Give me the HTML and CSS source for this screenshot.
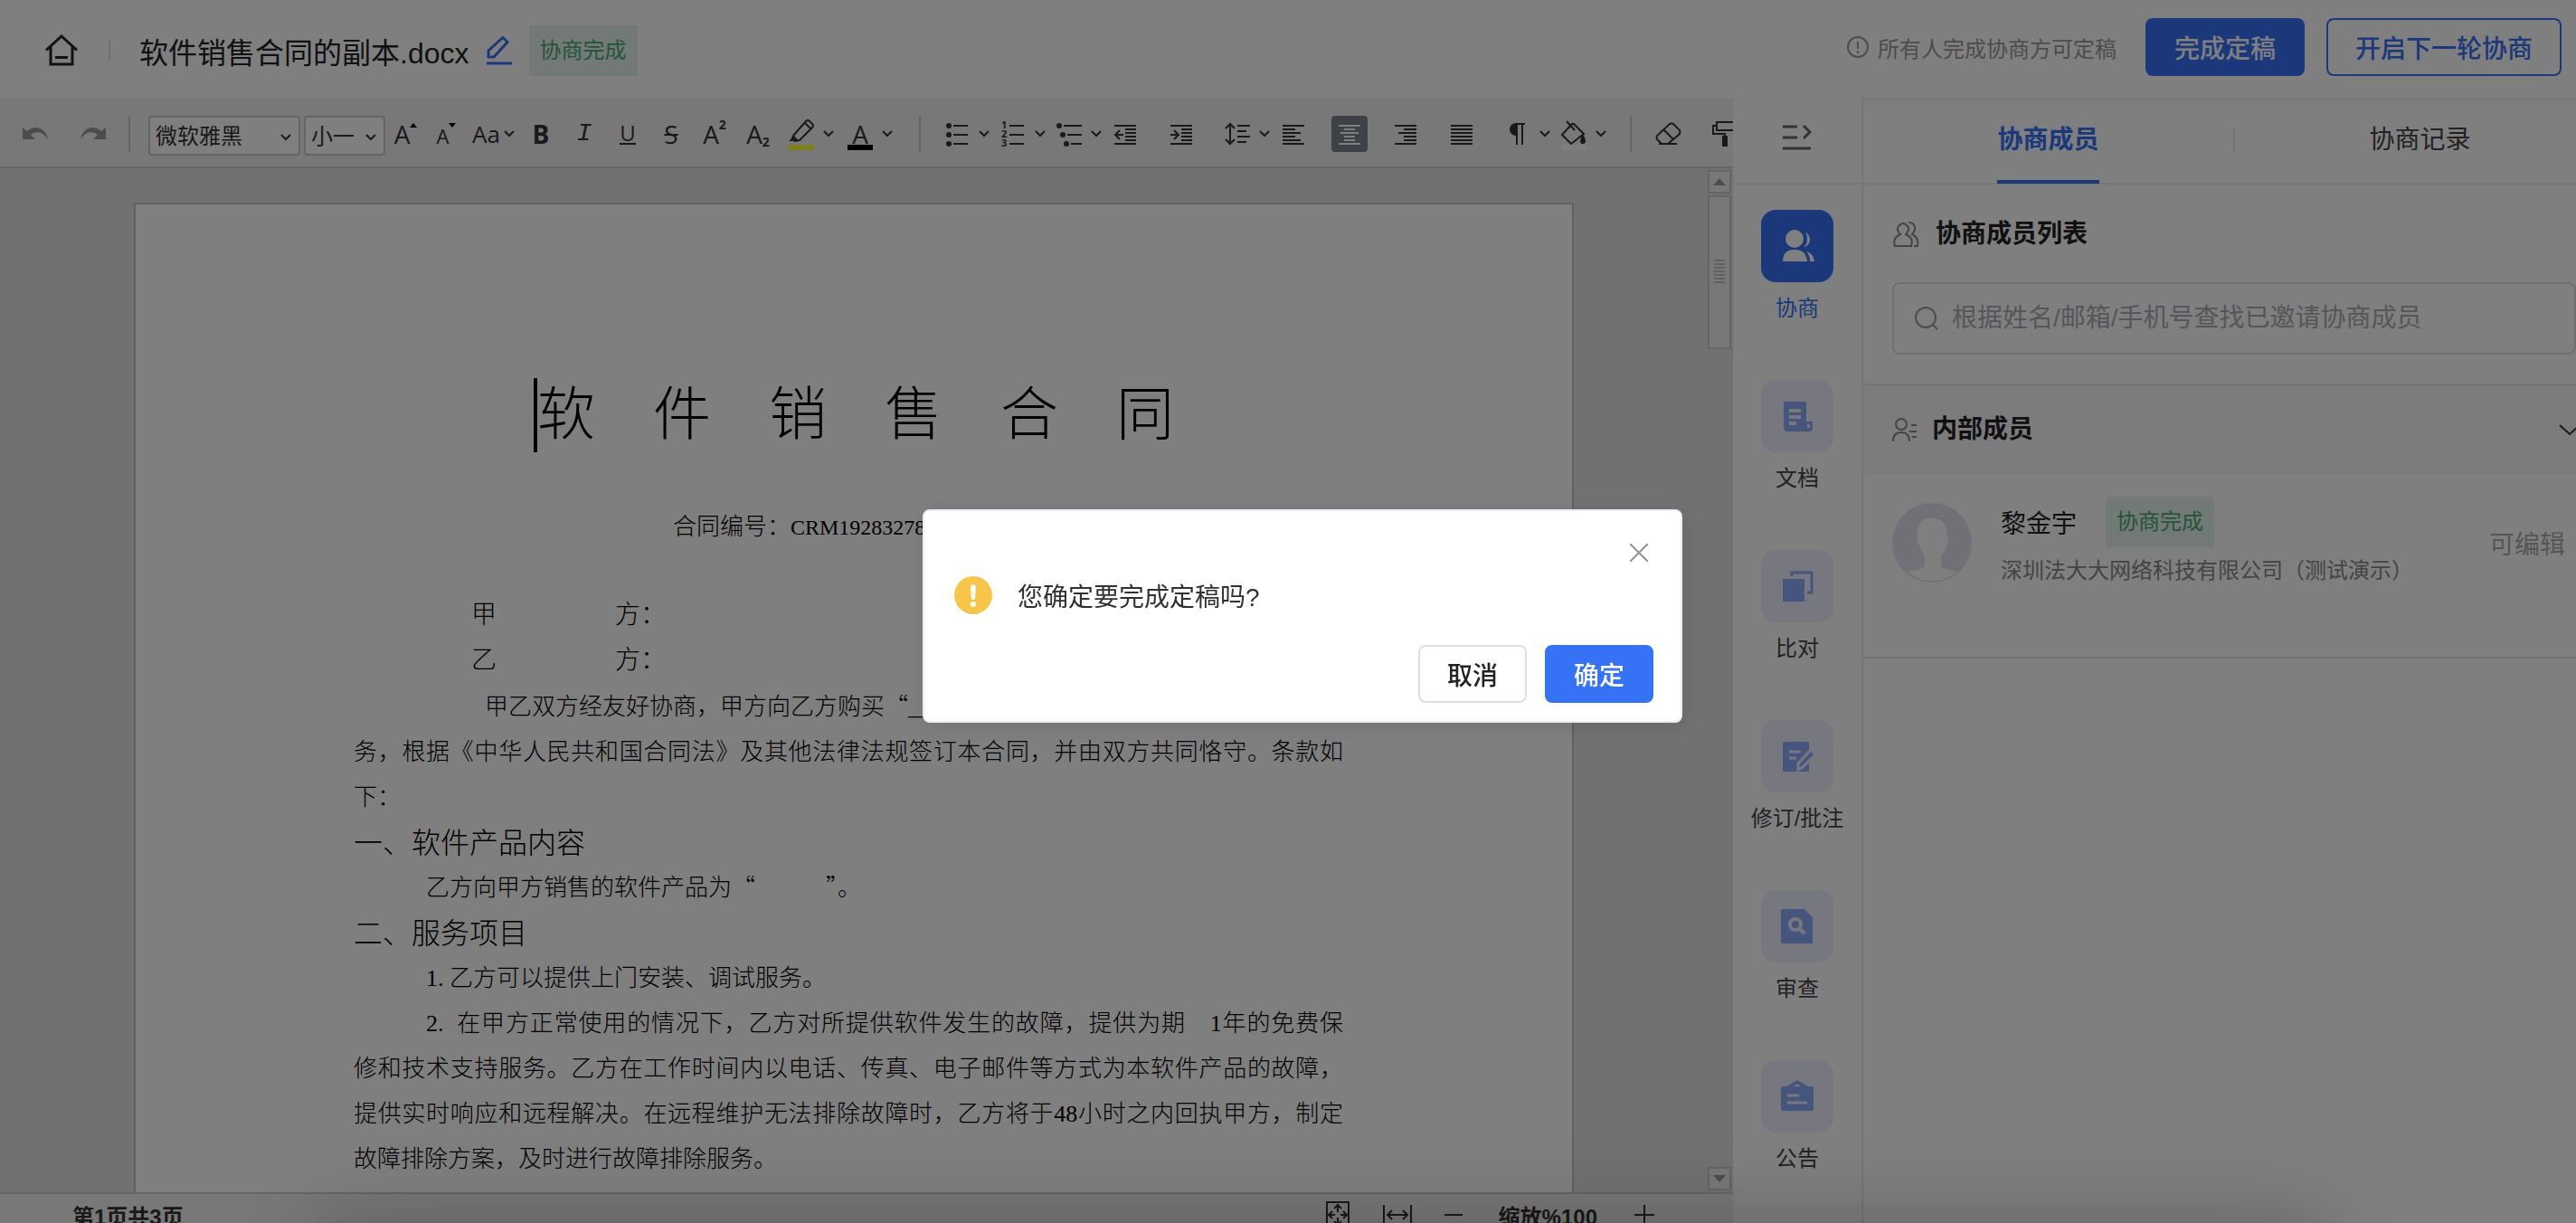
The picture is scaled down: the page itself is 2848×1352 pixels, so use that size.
FILE: index.html
```html
<!DOCTYPE html>
<html lang="zh-CN">
<head>
    <meta charset="UTF-8">
    <meta name="viewport" content="width=device-width, initial-scale=1.0">
    <title>合同协商</title>
    <link rel="stylesheet" href="styles.css">
</head>
<body>
    <svg class="sprite" aria-hidden="true">
        <symbol id="caret" viewBox="0 0 12 8"><path d="M1 1l5 5 5-5" fill="none" stroke="currentColor" stroke-width="2"/></symbol>
        <symbol id="arrow-down" viewBox="0 0 24 14"><path d="M1 2l11 10L23 2" fill="none" stroke="currentColor" stroke-width="2"/></symbol>
    </svg>
    <div class="app">
        <header class="header">
            <div class="header-left">
                <a href="#" class="home" aria-label="首页">
                    <svg width="40" height="40" viewBox="0 0 40 40" fill="none" stroke="#222" stroke-width="3"><path d="M3 19.500L20 4l17 15.500M8 16v19h24V16"/><path d="M13 27.500h14"/></svg>
                </a>
                <span class="header-line"></span>
                <h1 class="file-name">软件销售合同的副本.docx</h1>
                <button type="button" class="icon-btn" aria-label="重命名">
                    <svg width="32" height="32" viewBox="0 0 32 32" fill="none" stroke="#3672f5" stroke-width="3"><path d="M4 23v-7L20 1.500l5 5L10 23z"/><path d="M2 30h28"/></svg>
                </button>
                <span class="tag">协商完成</span>
            </div>
            <div class="header-right">
                <p class="hint">
                    <svg width="24" height="24" viewBox="0 0 24 24" fill="none" stroke="#999" stroke-width="2"><circle cx="12" cy="12" r="11"/><path d="M12 6v8M12 16v3"/></svg>
                    所有人完成协商方可定稿
                </p>
                <button type="button" class="btn btn-primary">完成定稿</button>
                <button type="button" class="btn btn-outline">开启下一轮协商</button>
            </div>
        </header>

        <div class="main">
            <section class="editor">
                <div class="toolbar">
                    <div class="history">
                        <button type="button" class="icon-btn" aria-label="撤销"><svg width="32" height="20" viewBox="0 0 32 20"><path d="M1 3v13h14l-5-5c6-5 14-3 19 5C27 4 15-1 6 7z" fill="#999"/></svg></button>
                        <button type="button" class="icon-btn" aria-label="重做"><svg width="32" height="20" viewBox="0 0 32 20"><path d="M31 3v13H17l5-5C16 6 8 8 3 16 5 4 17-1 26 7z" fill="#999"/></svg></button>
                    </div>
                    <span class="split"></span>
                    <div class="select font-select">
                        <select aria-label="字体"><option>微软雅黑</option></select>
                        <svg class="caret"><use href="#caret"/></svg>
                    </div>
                    <div class="select size-select">
                        <select aria-label="字号"><option>小一</option></select>
                        <svg class="caret"><use href="#caret"/></svg>
                    </div>
                    <div class="tools">
                        <button type="button" class="tool tight">A<svg class="mark" width="8" height="5" viewBox="0 0 8 5"><path d="M0 5l4-5 4 5z"/></svg></button>
                        <button type="button" class="tool tight small">A<svg class="mark" width="8" height="5" viewBox="0 0 8 5"><path d="M0 0l4 5 4-5z"/></svg></button>
                        <button type="button" class="tool wide case"><span>Aa</span><svg class="caret"><use href="#caret"/></svg></button>
                        <button type="button" class="tool"><b>B</b></button>
                        <button type="button" class="tool"><i class="italic">I</i></button>
                        <button type="button" class="tool"><span class="under">U</span></button>
                        <button type="button" class="tool"><span class="strike">S</span></button>
                        <button type="button" class="tool">A<sup>2</sup></button>
                        <button type="button" class="tool">A<sub>2</sub></button>
                        <button type="button" class="tool color" aria-label="突出显示">
                            <svg width="40" height="40" viewBox="0 0 40 40"><path d="M11 22L25 6q2-2 4 0l3 3q2 2 0 4L18 27l-5 1-3-3zM24 8l7 7M11 24l6 4" fill="none" stroke="#333" stroke-width="2"/><path d="M6 28l6-6 5 6z" fill="#333"/><path d="M6 32h28v6H6z" fill="#ffff38"/></svg>
                            <svg class="caret"><use href="#caret"/></svg>
                        </button>
                        <button type="button" class="tool color" aria-label="字体颜色">
                            <span class="font-color">A</span>
                            <svg class="caret"><use href="#caret"/></svg>
                        </button>
                    </div>
                    <span class="split"></span>
                    <div class="tools para">
                        <button type="button" class="tool wide" aria-label="项目符号">
                            <svg width="40" height="40" viewBox="0 0 40 40"><g fill="#333"><circle cx="11" cy="11" r="3"/><circle cx="11" cy="21" r="3"/><circle cx="11" cy="31" r="3"/></g><path d="M16 11h16M16 21h16M16 31h16" stroke="#333" stroke-width="2"/></svg>
                            <svg class="caret"><use href="#caret"/></svg>
                        </button>
                        <button type="button" class="tool wide" aria-label="编号">
                            <svg width="40" height="40" viewBox="0 0 40 40"><g class="nums"><text x="7" y="14">1</text><text x="7" y="24">2</text><text x="7" y="34">3</text></g><path d="M16 11h16M16 21h16M16 31h16" stroke="#333" stroke-width="2"/></svg>
                            <svg class="caret"><use href="#caret"/></svg>
                        </button>
                        <button type="button" class="tool wide" aria-label="多级列表">
                            <svg width="40" height="40" viewBox="0 0 40 40"><g fill="#333"><circle cx="9" cy="11" r="3"/><circle cx="13" cy="21" r="3"/><circle cx="17" cy="31" r="3"/></g><path d="M14 11h20M18 21h16M22 31h12" stroke="#333" stroke-width="2"/></svg>
                            <svg class="caret"><use href="#caret"/></svg>
                        </button>
                        <button type="button" class="tool wide" aria-label="减少缩进">
                            <svg width="40" height="40" viewBox="0 0 40 40" fill="none" stroke="#333" stroke-width="2"><path d="M8 11h24M20 15h12M20 19h12M20 23h12M20 27h12M8 31h24M9 21h9M14 16l-5 5 5 5"/></svg>
                        </button>
                        <button type="button" class="tool wide" aria-label="增加缩进">
                            <svg width="40" height="40" viewBox="0 0 40 40" fill="none" stroke="#333" stroke-width="2"><path d="M8 11h24M20 15h12M20 19h12M20 23h12M20 27h12M8 31h24M8 21h9M12 16l5 5-5 5"/></svg>
                        </button>
                        <button type="button" class="tool wide" aria-label="行距">
                            <svg width="40" height="40" viewBox="0 0 40 40" fill="none" stroke="#333" stroke-width="2"><path d="M20 11h14M20 17h10M20 23h14M20 29h10M12 9v22M7 14l5-5 5 5M7 26l5 5 5-5"/></svg>
                            <svg class="caret"><use href="#caret"/></svg>
                        </button>
                        <button type="button" class="tool wide" aria-label="左对齐">
                            <svg width="40" height="40" viewBox="0 0 40 40" stroke="#333" stroke-width="2"><path d="M8 11h24M8 15h14M8 19h20M8 23h14M8 27h20M8 31h24"/></svg>
                        </button>
                        <button type="button" class="tool wide" aria-label="居中">
                            <svg class="active" width="40" height="40" viewBox="0 0 40 40" stroke="#fff" stroke-width="2"><path d="M8 11h24M14 15h12M10 19h20M14 23h12M14 27h12M8 31h24"/></svg>
                        </button>
                        <button type="button" class="tool wide" aria-label="右对齐">
                            <svg width="40" height="40" viewBox="0 0 40 40" stroke="#333" stroke-width="2"><path d="M8 11h24M18 15h14M12 19h20M18 23h14M18 27h14M8 31h24"/></svg>
                        </button>
                        <button type="button" class="tool wide" aria-label="两端对齐">
                            <svg width="40" height="40" viewBox="0 0 40 40" stroke="#333" stroke-width="2"><path d="M8 11h24M8 15h24M8 19h24M8 23h24M8 27h24M8 31h24"/></svg>
                        </button>
                        <button type="button" class="tool wide" aria-label="段落标记">
                            <svg width="40" height="40" viewBox="0 0 40 40"><path d="M18 22a7 7 0 0 1 0-14h10v2H18z" fill="#333"/><path d="M19 8v24M25 8v24M17 9h11" fill="none" stroke="#333" stroke-width="2"/></svg>
                            <svg class="caret"><use href="#caret"/></svg>
                        </button>
                        <button type="button" class="tool wide" aria-label="底纹">
                            <svg width="40" height="40" viewBox="0 0 40 40"><path d="M6 32h28v6H6z" fill="#fff"/><path d="M18 9L7 21l10 10L31 20 20 9zM12 6l9 10" fill="none" stroke="#333" stroke-width="2"/><path d="M30 22q4 8 0 8t0-8z" fill="#333" stroke="#333" stroke-width="2"/></svg>
                            <svg class="caret"><use href="#caret"/></svg>
                        </button>
                    </div>
                    <span class="split"></span>
                    <div class="tools para">
                        <button type="button" class="tool wide" aria-label="清除格式">
                            <svg width="40" height="40" viewBox="0 0 40 40" fill="none" stroke="#333" stroke-width="2"><path d="M10 31h20M13 31l-5-5q-1-2 0-4L22 9q2-1 4 0l7 7q1 2 0 4L20 31M15 15l11 11"/></svg>
                        </button>
                        <button type="button" class="tool wide" aria-label="格式刷">
                            <svg width="40" height="40" viewBox="0 0 40 40" fill="none" stroke="#333" stroke-width="2"><path d="M12 7h22v9H12zM12 11H8v9h13v5"/><path d="M18 22h6v12h-6z" fill="#333" stroke="none"/></svg>
                        </button>
                    </div>
                </div>

                <div class="canvas">
                    <div class="desk">
                        <article class="page">
                            <h2 class="doc-title">软　件　销　售　合　同</h2>
                            <p class="doc-no">合同编号：<span>CRM19283278</span></p>
                            <p class="party"><span>甲 方</span>：</p>
                            <p class="party"><span>乙 方</span>：</p>
                            <div class="doc-body">
                                <p class="first">甲乙双方经友好协商，甲方向乙方购买<span class="quote">“</span>____</p>
                                <p class="full">务，根据《中华人民共和国合同法》及其他法律法规签订本合同，并由双方共同恪守。条款如</p>
                                <p>下：</p>
                                <h3>一、软件产品内容</h3>
                                <p class="indent">乙方向甲方销售的软件产品为<span class="quote">“　　　”</span>。</p>
                                <h3>二、服务项目</h3>
                                <p class="indent">1. 乙方可以提供上门安装、调试服务。</p>
                                <p class="indent full">2.&nbsp; 在甲方正常使用的情况下，乙方对所提供软件发生的故障，提供为期　1年的免费保</p>
                                <p class="full">修和技术支持服务。乙方在工作时间内以电话、传真、电子邮件等方式为本软件产品的故障，</p>
                                <p class="full">提供实时响应和远程解决。在远程维护无法排除故障时，乙方将于48小时之内回执甲方，制定</p>
                                <p>故障排除方案，及时进行故障排除服务。</p>
                            </div>
                        </article>
                    </div>
                    <div class="scrollbar">
                        <span class="scroll-btn"><svg width="14" height="8" viewBox="0 0 14 8"><path d="M0 8l7-8 7 8z"/></svg></span>
                        <span class="thumb"><svg width="12" height="28" viewBox="0 0 12 28"><path d="M0 1h12M0 5h12M0 9h12M0 13h12M0 17h12M0 21h12M0 25h12" stroke="#c0c0c0" stroke-width="2"/></svg></span>
                        <span class="scroll-btn last"><svg width="14" height="8" viewBox="0 0 14 8"><path d="M0 0l7 8 7-8z"/></svg></span>
                    </div>
                </div>

                <footer class="status">
                    <span>第1页共3页</span>
                    <div class="zoom">
                        <button type="button" class="icon-btn" aria-label="整页"><svg width="28" height="30" viewBox="0 0 28 30" fill="none" stroke="#333" stroke-width="2"><rect x="2" y="1" width="24" height="28"/><path d="M14 12V4M10 8l4-4 4 4M14 18v8M10 22l4 4 4-4M11 15H4M8 11l-4 4 4 4M17 15h7M20 11l4 4-4 4"/></svg></button>
                        <button type="button" class="icon-btn" aria-label="页宽"><svg width="32" height="24" viewBox="0 0 32 24" fill="none" stroke="#333" stroke-width="2"><path d="M1 1v22M31 1v22M5 12h22M10 7l-5 5 5 5M22 7l5 5-5 5"/></svg></button>
                        <button type="button" class="icon-btn" aria-label="缩小"><svg width="20" height="24" viewBox="0 0 20 24" stroke="#333" stroke-width="2"><path d="M0 12h20"/></svg></button>
                        <span class="zoom-value">缩放%100</span>
                        <button type="button" class="icon-btn" aria-label="放大"><svg width="24" height="24" viewBox="0 0 24 24" stroke="#333" stroke-width="2"><path d="M1 12h22M12 1v22"/></svg></button>
                    </div>
                </footer>
            </section>

            <nav class="side">
                <button type="button" class="fold" aria-label="收起">
                    <svg width="32" height="30" viewBox="0 0 32 30" fill="none" stroke="#666" stroke-width="3"><path d="M0 3h16M0 15h16M0 27h31M23 2l7 7-7 7"/></svg>
                </button>
                <button type="button" class="side-item current">
                    <span class="side-icon"><svg width="40" height="40" viewBox="0 0 40 40" fill="#fff"><circle cx="17" cy="12" r="10"/><path d="M4 37q0-13 13-13t14 13zM28 4q6 3 6 9t-7 9q4-4 4-10t-3-8zM30 26q8 2 9 11h-5q0-7-4-11z"/></svg></span>
                    协商
                </button>
                <button type="button" class="side-item">
                    <span class="side-icon"><svg width="40" height="40" viewBox="0 0 40 40"><path d="M6 4h22q2 0 2 2v20h7v7q0 4-4 4H10q-5 0-5-5V6q0-2 1-2z" fill="#8aaaf6"/><path d="M11 14h13M11 21h13M11 28h8" stroke="#eff1fe" stroke-width="4"/><path d="M31 29h3v4h-3z" fill="#eff1fe"/></svg></span>
                    文档
                </button>
                <button type="button" class="side-item">
                    <span class="side-icon"><svg width="40" height="40" viewBox="0 0 40 40"><path d="M4 12h24v25H4z" fill="#8aaaf6"/><path d="M14 9V5h22v22h-5" fill="none" stroke="#8aaaf6" stroke-width="3"/></svg></span>
                    比对
                </button>
                <button type="button" class="side-item">
                    <span class="side-icon"><svg width="40" height="40" viewBox="0 0 40 40"><path d="M6 4h25q2 0 2 2v30q0 1-2 1H6q-2 0-2-1V6q0-2 2-2z" fill="#8aaaf6"/><path d="M11 15h13M11 22h8" stroke="#eff1fe" stroke-width="3"/><path d="M21 28L35 13l5 5-14 14-5 3z" fill="#8aaaf6" stroke="#eff1fe" stroke-width="3"/></svg></span>
                    修订/批注
                </button>
                <button type="button" class="side-item">
                    <span class="side-icon"><svg width="40" height="40" viewBox="0 0 40 40"><path d="M3 1h25l9 9v28q0 1-1 1H3q-1 0-1-1V2q0-1 1-1z" fill="#8aaaf6"/><circle cx="18" cy="18" r="6" fill="none" stroke="#eff1fe" stroke-width="4"/><path d="M22 22l6 6" stroke="#eff1fe" stroke-width="4"/></svg></span>
                    审查
                </button>
                <button type="button" class="side-item">
                    <span class="side-icon"><svg width="40" height="40" viewBox="0 0 40 40"><path d="M4 9h4l12-7 12 7h4q2 0 2 2v23q0 2-2 2H4q-2 0-2-2V11q0-2 2-2zm12 0h8l-4-3z" fill="#8aaaf6" fill-rule="evenodd"/><path d="M9 19h13M9 27h22" stroke="#eff1fe" stroke-width="3"/></svg></span>
                    公告
                </button>
            </nav>

            <aside class="panel">
                <div class="tabs">
                    <button type="button" class="tab on"><span>协商成员</span></button>
                    <span class="tab-line"></span>
                    <button type="button" class="tab"><span>协商记录</span></button>
                </div>
                <div class="search">
                    <h2><svg width="32" height="28" viewBox="0 0 32 28" fill="none" stroke="#888" stroke-width="2"><path d="M3 27q-3-9 6-13-5-5-2-9 5-6 10 0 3 4-2 9 9 4 6 13zM18 1q7 0 7 6 0 5-3 7 8 4 6 13h-4"/></svg>协商成员列表</h2>
                    <div class="search-box">
                        <svg width="28" height="28" viewBox="0 0 28 28" fill="none" stroke="#999" stroke-width="2"><circle cx="13" cy="13" r="11"/><path d="M21 21l5 5"/></svg>
                        <input type="text" aria-label="查找协商成员" placeholder="根据姓名/邮箱/手机号查找已邀请协商成员">
                    </div>
                </div>
                <div class="group">
                    <h2><svg width="28" height="26" viewBox="0 0 28 26" fill="none" stroke="#888" stroke-width="2"><circle cx="10" cy="7" r="6"/><path d="M1 26q0-10 9-10t9 10M21 8h6M19 15h8M22 21h5"/></svg>内部成员</h2>
                    <svg class="group-arrow" width="24" height="14"><use href="#arrow-down"/></svg>
                </div>
                <div class="member">
                    <svg class="avatar" width="88" height="88" viewBox="0 0 88 88"><circle cx="44" cy="44" r="44" fill="#dfe2ec"/><path d="M36 70V58Q31 52 30 46q-3-2-3-6 1 0 1-3-1-20 13-20 5-2 9 1 10 2 11 18l1 6q0 3-2 5-1 6-6 11v12q2 3 18 6-12 10-28 10T17 76q16-3 19-6z" fill="#fff"/></svg>
                    <div class="member-info">
                        <div class="member-name">黎金宇<span class="tag">协商完成</span></div>
                        <p>深圳法大大网络科技有限公司（测试演示）</p>
                    </div>
                    <span class="role">可编辑</span>
                </div>
            </aside>
        </div>
    </div>

    <div class="mask">
        <div class="dialog" role="dialog" aria-modal="true" aria-labelledby="dialog-text">
            <button type="button" class="close" aria-label="关闭"><svg width="20" height="20" viewBox="0 0 20 20" stroke="#909399" stroke-width="2"><path d="M0 0l20 20M20 0L0 20"/></svg></button>
            <p class="dialog-text" id="dialog-text">
                <svg width="42" height="42" viewBox="0 0 42 42"><circle cx="21" cy="21" r="21" fill="#f7c548"/><path d="M18 11q3-4 6 0l-1 14q-2 2-4 0z" fill="#fff"/><circle cx="21" cy="31" r="3" fill="#fff"/></svg>
                您确定要完成定稿吗?
            </p>
            <div class="dialog-btns">
                <button type="button" class="btn btn-plain">取消</button>
                <button type="button" class="btn btn-primary">确定</button>
            </div>
        </div>
    </div>
    <div class="dock-shadow"></div>
</body>
</html>
```
FILE: styles.css
```css
* {
    box-sizing: border-box;
}
body {
    margin: 0;
    height: 100vh;
    overflow: hidden;
    font-family: "Liberation Sans", "Noto Sans CJK SC", sans-serif;
    font-size: 24px;
    color: #333;
    background: white;
}
h1, h2, h3, p {
    margin: 0;
    font-weight: inherit;
}
button {
    font-family: inherit;
    color: inherit;
    border: none;
    background: none;
    padding: 0;
    cursor: pointer;
}
svg {
    display: block;
    flex: none;
}
.sprite {
    position: absolute;
    width: 0;
    height: 0;
}
.app {
    display: flex;
    flex-direction: column;
    width: calc(100vw + 32px);
    height: calc(100vh + 18px);
}

/* header */
.header {
    display: flex;
    justify-content: space-between;
    align-items: flex-start;
    height: 108px;
    width: 100vw;
    padding: 20px 16px 0 48px;
    flex: none;
}
.header-left {
    display: flex;
    align-items: center;
    gap: 17px;
    margin-top: 8px;
}
.header-line {
    width: 2px;
    height: 24px;
    margin: 0 15px;
    background: #e4e4e4;
}
.file-name {
    font-size: 32px;
    color: #222;
}
.tag {
    font-size: 24px;
    font-weight: normal;
    line-height: 56px;
    padding: 0 12px;
    border-radius: 4px;
    color: #48a873;
    background: #e4f3ed;
}
.header-right {
    display: flex;
    align-items: center;
    gap: 24px;
}
.hint {
    display: flex;
    align-items: center;
    gap: 10px;
    margin-right: 8px;
    color: #999;
}
.btn {
    height: 64px;
    padding: 0 30px;
    font-size: 28px;
    font-weight: 500;
    border: 2px solid #3672f5;
    border-radius: 8px;
}
.btn-primary {
    color: white;
    background: #3672f5;
}
.btn-outline {
    color: #3672f5;
}
.btn-plain {
    color: #222;
    border-color: #dcdfe6;
}

/* editor */
.main {
    display: flex;
    flex: 1;
    min-height: 0;
}
.editor {
    display: flex;
    flex-direction: column;
    flex: 1;
    min-width: 0;
}
.toolbar {
    display: flex;
    align-items: center;
    height: 78px;
    flex: none;
    padding: 4px 0 0 24px;
    border-bottom: 2px solid #cbcbcb;
    background: #f1f1f1;
    overflow: hidden;
}
.history {
    display: flex;
    gap: 30px;
}
.split {
    width: 2px;
    height: 40px;
    margin: 0 20px;
    flex: none;
    background: #cbcbcb;
}
.history + .split {
    margin-left: 24px;
}
.select {
    position: relative;
    height: 44px;
    margin-top: 4px;
    flex: none;
}
.font-select {
    width: 168px;
    margin-right: 4px;
}
.size-select {
    width: 90px;
}
.select select {
    width: 100%;
    height: 100%;
    padding: 0 6px;
    appearance: none;
    font-family: inherit;
    font-size: 24px;
    color: #333;
    border: 2px solid #cbcbcb;
    border-radius: 4px;
    background: white;
}
.select .caret {
    position: absolute;
    right: 10px;
    top: 20px;
}
.caret {
    width: 12px;
    height: 8px;
}
.tools {
    display: flex;
    flex: none;
}
.tool {
    display: flex;
    align-items: center;
    justify-content: center;
    width: 48px;
    height: 40px;
    padding-right: 8px;
    font-family: "Open Sans", sans-serif;
    font-size: 28px;
    line-height: 40px;
}
.tool.tight {
    width: 45px;
    padding-right: 0;
    align-items: flex-start;
}
.tool.small {
    font-size: 22px;
    line-height: 44px;
}
.mark {
    margin-top: 8px;
}
.tool.wide {
    width: 62px;
    justify-content: flex-start;
    gap: 4px;
}
.tool.color {
    width: 65px;
    justify-content: flex-start;
    gap: 4px;
}
.case {
    font-size: 26px;
    padding-left: 6px;
}
.italic {
    font-family: "Liberation Mono", monospace;
}
.under {
    font-size: 24px;
    line-height: 22px;
    border-bottom: 2px solid #333;
}
.strike {
    text-decoration: line-through;
    text-decoration-thickness: 2px;
}
.tool sup, .tool sub {
    font-size: 14px;
    font-weight: bold;
    line-height: 14px;
}
.tool sup {
    align-self: flex-start;
    margin-top: 3px;
}
.tool sub {
    align-self: flex-end;
    margin-bottom: 4px;
}
.font-color {
    width: 28px;
    height: 38px;
    margin: 0 6px;
    line-height: 40px;
    border-bottom: 6px solid black;
    align-self: flex-start;
}
.nums text {
    font: bold 11px "Open Sans", sans-serif;
    fill: #333;
}
.active {
    border-radius: 4px;
    background: #7d858c;
}
.canvas {
    display: flex;
    flex: 1;
    min-height: 0;
    background: #e2e2e2;
}
.desk {
    flex: 1;
    padding: 38px 148px 0;
    overflow: hidden;
}
.page {
    height: 2250px;
    padding: 0 253px 0 241px;
    border: 2px solid #c4c4c4;
    background: white;
    color: black;
    font-family: "Liberation Serif", "Noto Sans CJK SC", serif;
    font-size: 26px;
    font-weight: 300;
    line-height: 50px;
}
.doc-title {
    width: fit-content;
    margin: 192px 0 0 199px;
    font-size: 64px;
    line-height: 82px;
    border-left: 4px solid black;
    white-space: nowrap;
}
.doc-no {
    margin: 58px 0 47px 353px;
}
.doc-no span {
    font-size: 24px;
}
.party {
    padding-left: 130px;
    font-size: 28px;
    white-space: nowrap;
}
.party span {
    display: inline-block;
    width: 187px;
    text-align-last: justify;
}
.doc-body {
    margin-top: 2px;
}
.doc-body p {
    white-space: nowrap;
}
.doc-body .first {
    padding-left: 145px;
}
.doc-body .indent {
    padding-left: 80px;
}
.doc-body .full {
    text-align-last: justify;
}
.doc-body h3 {
    font-size: 32px;
}
.quote {
    font-family: "Noto Sans CJK SC", sans-serif;
    line-height: 1;
}
.scrollbar {
    display: flex;
    flex-direction: column;
    gap: 2px;
    width: 28px;
    padding: 2px 2px 2px 0;
}
.scroll-btn, .thumb {
    display: flex;
    align-items: center;
    justify-content: center;
    height: 26px;
    border: 2px solid #cbcbcb;
    background: #f1f1f1;
    fill: #999;
}
.thumb {
    height: 170px;
}
.scroll-btn.last {
    margin-top: auto;
}
.status {
    display: flex;
    align-items: center;
    justify-content: space-between;
    height: 52px;
    flex: none;
    padding: 0 86px 4px 80px;
    border-top: 2px solid #cbcbcb;
    background: #f1f1f1;
    font-weight: bold;
}
.zoom {
    display: flex;
    align-items: center;
    gap: 36px;
}
.zoom-value {
    margin: 0 4px;
}

/* side menu */
.side {
    display: flex;
    flex-direction: column;
    width: 144px;
    flex: none;
    border-right: 2px solid #ececec;
}
.fold {
    display: flex;
    justify-content: center;
    align-items: center;
    height: 96px;
    margin-bottom: 28px;
    padding-bottom: 6px;
    flex: none;
    border-bottom: 2px solid #ececec;
}
.side-item {
    display: flex;
    flex-direction: column;
    align-items: center;
    height: 188px;
    flex: none;
    font-size: 24px;
    line-height: 58px;
    color: #444;
}
.side-icon {
    display: flex;
    align-items: center;
    justify-content: center;
    width: 80px;
    height: 80px;
    border-radius: 16px;
    background: #eff1fe;
}
.current {
    color: #3672f5;
}
.current .side-icon {
    background: #3672f5;
}

/* member panel */
.panel {
    width: 820px;
    flex: none;
    box-shadow: inset 0 8px 8px -8px #ddd;
}
.tabs {
    display: flex;
    align-items: center;
    height: 96px;
    border-bottom: 2px solid #ececec;
}
.tab {
    flex: 1;
    height: 96px;
    font-size: 28px;
    color: #444;
}
.tab span {
    display: inline-block;
    padding-top: 4px;
    line-height: 88px;
    border-bottom: 4px solid transparent;
}
.tab.on span {
    color: #3672f5;
    font-weight: bold;
    border-color: #3672f5;
}
.tab-line {
    width: 2px;
    height: 24px;
    background: #e4e4e4;
}
.search {
    padding: 32px;
    border-bottom: 2px solid #e4e7f0;
}
.panel h2 {
    display: flex;
    align-items: center;
    gap: 16px;
    font-size: 28px;
    font-weight: bold;
    line-height: 46px;
    color: #222;
}
.search-box {
    display: flex;
    align-items: center;
    gap: 14px;
    height: 80px;
    margin-top: 30px;
    padding: 0 22px;
    border: 2px solid #dcdfe6;
    border-radius: 8px;
}
.search-box input {
    flex: 1;
    border: none;
    outline: none;
    padding: 0;
    background: none;
    font-family: inherit;
    font-size: 28px;
}
.search-box input::placeholder {
    color: #aaacb2;
}
.group {
    display: flex;
    align-items: center;
    justify-content: space-between;
    height: 98px;
    padding: 0 27px 0 32px;
    background: #f8f8f8;
}
.member {
    display: flex;
    align-items: center;
    gap: 32px;
    padding: 24px 44px 74px 32px;
    border-bottom: 2px solid #e4e7f0;
}
.member-info {
    flex: 1;
}
.member-name {
    display: flex;
    align-items: center;
    gap: 32px;
    height: 58px;
    font-size: 28px;
    color: #222;
}
.member-info p {
    margin-top: 4px;
    line-height: 42px;
    color: #888;
}
.role {
    font-size: 28px;
    color: #aaa;
}

/* dialog */
.mask {
    position: fixed;
    top: 0;
    left: 0;
    right: -32px;
    bottom: -10px;
    display: flex;
    align-items: center;
    justify-content: center;
    background: rgba(0, 0, 0, 0.5);
}
.dialog {
    display: flex;
    flex-direction: column;
    width: 840px;
    height: 236px;
    padding: 36px 30px 20px 33px;
    border: 2px solid #ebeef5;
    border-radius: 8px;
    background: white;
    box-shadow: 0 4px 24px rgba(0, 0, 0, 0.1);
}
.close {
    align-self: flex-end;
    margin-right: 6px;
}
.dialog-text {
    display: flex;
    align-items: center;
    gap: 28px;
    height: 42px;
    margin-top: 16px;
    font-size: 28px;
    color: #303133;
}
.dialog-btns {
    display: flex;
    justify-content: flex-end;
    gap: 20px;
    margin-top: auto;
}
.dock-shadow {
    position: fixed;
    left: 360px;
    right: 290px;
    bottom: -80px;
    height: 60px;
    border-radius: 30px;
    box-shadow: 0 0 90px 20px rgba(0, 0, 0, 0.24);
}
```
